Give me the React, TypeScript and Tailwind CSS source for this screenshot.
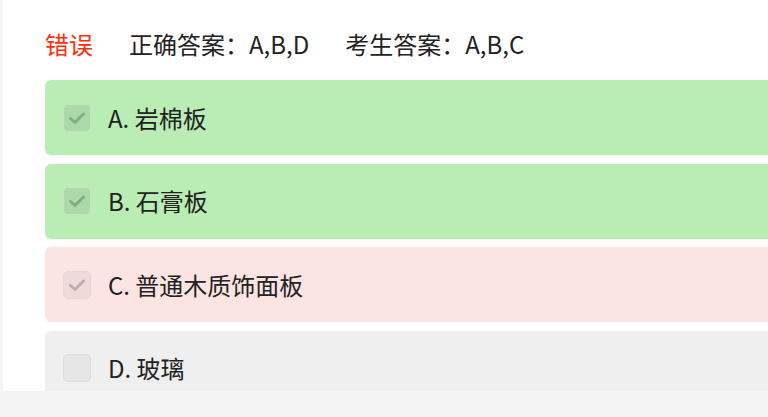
import React from "react";

type Opt = { label: string; checked: boolean; kind: "right" | "wrong" | "none" };

const opts: Opt[] = [
  { label: "A. 岩棉板", checked: true, kind: "right" },
  { label: "B. 石膏板", checked: true, kind: "right" },
  { label: "C. 普通木质饰面板", checked: true, kind: "wrong" },
  { label: "D. 玻璃", checked: false, kind: "none" },
];

function Box({ kind, checked }: { kind: Opt["kind"]; checked: boolean }) {
  const cls =
    kind === "right"
      ? "bg-[#acd9a8] border-[#cbe0c8]"
      : kind === "wrong"
      ? "bg-[#f0d9d9] border-[#e6d6d6]"
      : "bg-[#e6e6e6] border-[#dcdcdc]";
  const stroke = kind === "right" ? "#84ab81" : "#bcaeae";
  return (
    <div className={`w-[28px] h-[28px] rounded-[5px] border ${cls} flex items-center justify-center shrink-0`}>
      {checked && (
        <svg width="22" height="22" viewBox="0 0 22 22" fill="none">
          <path d="M4.5 11.5 L9 15.5 L17.5 7" stroke={stroke} strokeWidth="3" strokeLinecap="round" strokeLinejoin="round" />
        </svg>
      )}
    </div>
  );
}

export default function App() {
  return (
    <div
      className="w-[768px] h-[417px] bg-[#f4f4f4] overflow-hidden"
      style={{ fontFamily: '"Noto Sans CJK SC", "Noto Sans", sans-serif' }}
    >
      <div className="ml-[3px] h-[391px] bg-white overflow-hidden pl-[42px]">
        <div className="h-[80px] flex items-center text-[24px] text-[#222] pt-[8px]">
          <span className="text-[#ff2d0c] mr-[36px]">错误</span>
          <span className="mr-[36px]">正确答案：A,B,D</span>
          <span>考生答案：A,B,C</span>
        </div>
        <div className="flex flex-col gap-[8.5px]">
          {opts.map((o) => (
            <div
              key={o.label}
              className={`h-[75px] rounded-l-[6px] flex items-center pl-[18px] gap-[17px] text-[24px] text-[#222] ${
                o.kind === "right" ? "bg-[#b9edb4]" : o.kind === "wrong" ? "bg-[#fce4e3]" : "bg-[#efefef]"
              }`}
            >
              <Box kind={o.kind} checked={o.checked} />
              <span>{o.label}</span>
            </div>
          ))}
        </div>
      </div>
    </div>
  );
}
